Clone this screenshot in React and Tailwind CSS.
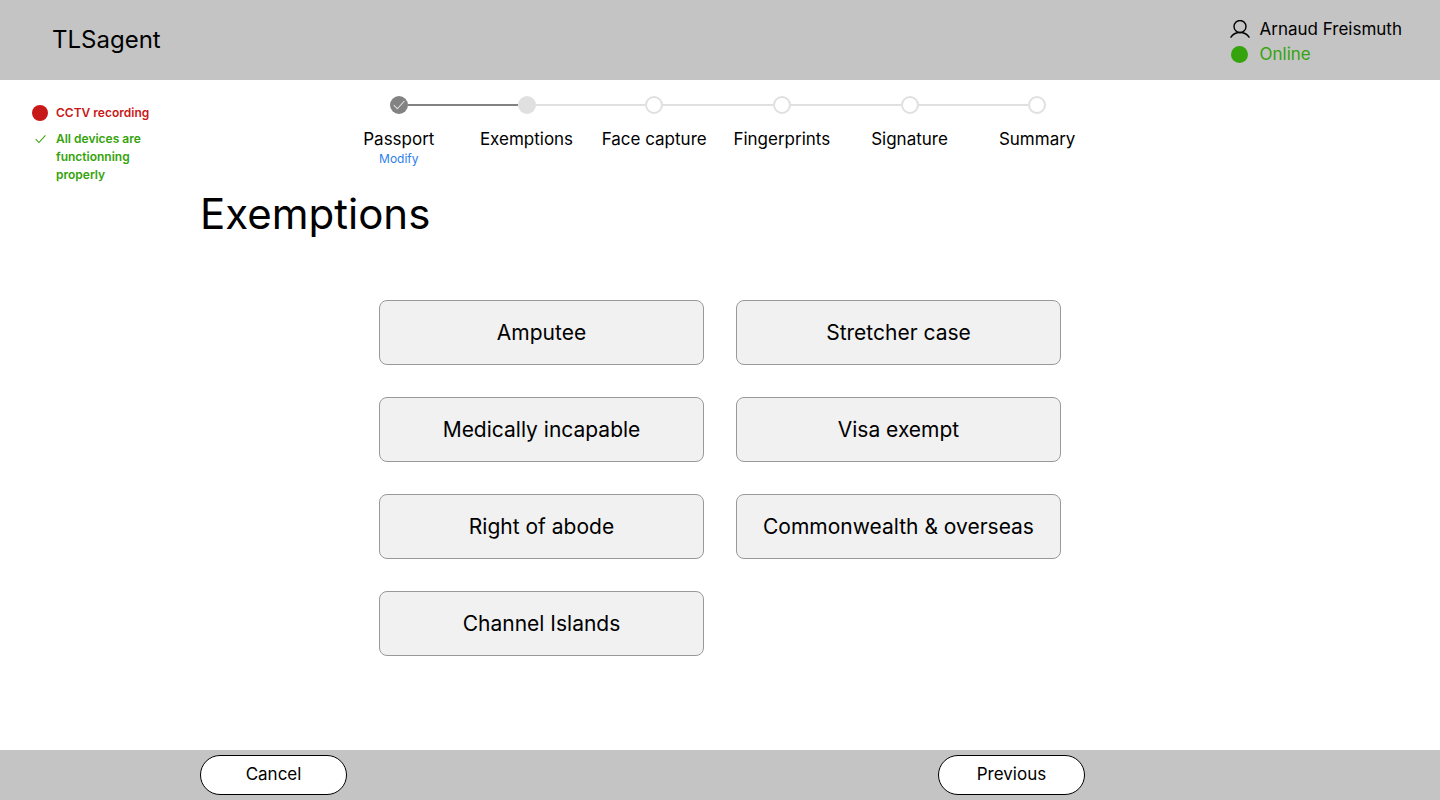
const steps = [
  { label: "Passport", state: "done" },
  { label: "Exemptions", state: "current" },
  { label: "Face capture", state: "todo" },
  { label: "Fingerprints", state: "todo" },
  { label: "Signature", state: "todo" },
  { label: "Summary", state: "todo" },
];

const exemptions = [
  "Amputee",
  "Stretcher case",
  "Medically incapable",
  "Visa exempt",
  "Right of abode",
  "Commonwealth & overseas",
  "Channel Islands",
];

const dotStyles = {
  done: "bg-[#828282]",
  current: "bg-[#e0e0e0]",
  todo: "border-2 border-[#e0e0e0] bg-white",
};

function Check({ className }) {
  return (
    <svg viewBox="0 0 12 10" fill="none" stroke="currentColor" strokeWidth="1.1" aria-hidden="true" className={className}>
      <path d="M.8 5.200 4.300 8.800 11.400 1" />
    </svg>
  );
}

function Header() {
  return (
    <header className="flex h-20 items-center justify-between bg-[#c4c4c4] pr-[38px] pl-[52px]">
      <p className="text-2xl leading-9">TLSagent</p>
      <div className="flex flex-col pt-1 text-[17px] leading-[25px]">
        <div className="flex items-center gap-[10px]">
          <svg viewBox="0 0 20 20" fill="none" stroke="black" strokeWidth="1.4" aria-hidden="true" className="size-5">
            <circle cx="10" cy="6.500" r="6" />
            <path d="M.6 17.600C2.600 14.300 6.100 12.500 10 12.500s7.400 1.800 9.400 5.100" />
          </svg>
          <span>Arnaud Freismuth</span>
        </div>
        <div className="flex items-center gap-[10px] text-[#34a30c]">
          <span className="flex w-5 justify-center">
            <span className="size-[17px] rounded-full bg-[#34a30c]" />
          </span>
          <span>Online</span>
        </div>
      </div>
    </header>
  );
}

function DeviceStatus() {
  return (
    <aside className="flex w-[168px] shrink-0 flex-col gap-2 pt-6 pl-8 text-[12px] leading-[18px] font-semibold">
      <div className="flex items-center gap-2 text-[#c81919]">
        <span className="size-4 shrink-0 rounded-full bg-[#c81919]" />
        <span>CCTV recording</span>
      </div>
      <div className="flex gap-2 text-[#34a30c]">
        <span className="flex h-[18px] w-4 shrink-0 items-center justify-center">
          <Check className="h-[10px] w-[11px]" />
        </span>
        <span>All devices are functionning properly</span>
      </div>
    </aside>
  );
}

function Stepper() {
  return (
    <ol className="mx-auto grid w-full max-w-[766px] grid-cols-6">
      {steps.map((step, i) => (
        <li key={step.label} className="flex flex-col items-center">
          <div className="flex w-full items-center">
            <span
              className={`h-[2px] flex-1 ${i === 0 ? "bg-transparent" : i === 1 ? "bg-[#828282]" : "bg-[#e0e0e0]"}`}
            />
            <span
              className={`flex size-[18px] items-center justify-center rounded-full ${dotStyles[step.state]}`}
            >
              {step.state === "done" && <Check className="h-[10px] w-3 text-[#e0e0e0]" />}
            </span>
            <span
              className={`h-[2px] flex-1 ${i === steps.length - 1 ? "bg-transparent" : i === 0 ? "bg-[#828282]" : "bg-[#e0e0e0]"}`}
            />
          </div>
          <span className="pt-[13px] text-[17px] leading-6 whitespace-nowrap">{step.label}</span>
          {step.state === "done" && (
            <a href="#passport" className="text-[12px] leading-4 text-[#2f80ed]">
              Modify
            </a>
          )}
        </li>
      ))}
    </ol>
  );
}

export default function App() {
  return (
    <div className="flex min-h-screen flex-col bg-white font-['Inter',sans-serif] text-black">
      <Header />
      <div className="flex flex-1">
        <DeviceStatus />
        <main className="flex-1 pt-4 pr-[172px]">
          <div className="h-[94px]">
            <Stepper />
          </div>
          <h1 className="pl-8 text-[42px] leading-[48px]">Exemptions</h1>
          <div className="mx-auto box-content grid max-w-[682px] grid-cols-2 gap-8 pt-[62px] pb-8 pl-1">
            {exemptions.map((name) => (
              <button
                key={name}
                type="button"
                className="h-[65px] rounded-lg border border-[#999999] bg-[#f1f1f1] text-[21px]"
              >
                {name}
              </button>
            ))}
          </div>
        </main>
      </div>
      <footer className="flex h-[50px] items-center bg-[#c4c4c4] pl-[200px]">
        <div className="flex w-full max-w-[885px] justify-between">
          <button type="button" className="h-10 w-[147px] rounded-full border border-black bg-white text-[17px]">
            Cancel
          </button>
          <button type="button" className="h-10 w-[147px] rounded-full border border-black bg-white text-[17px]">
            Previous
          </button>
        </div>
      </footer>
    </div>
  );
}
